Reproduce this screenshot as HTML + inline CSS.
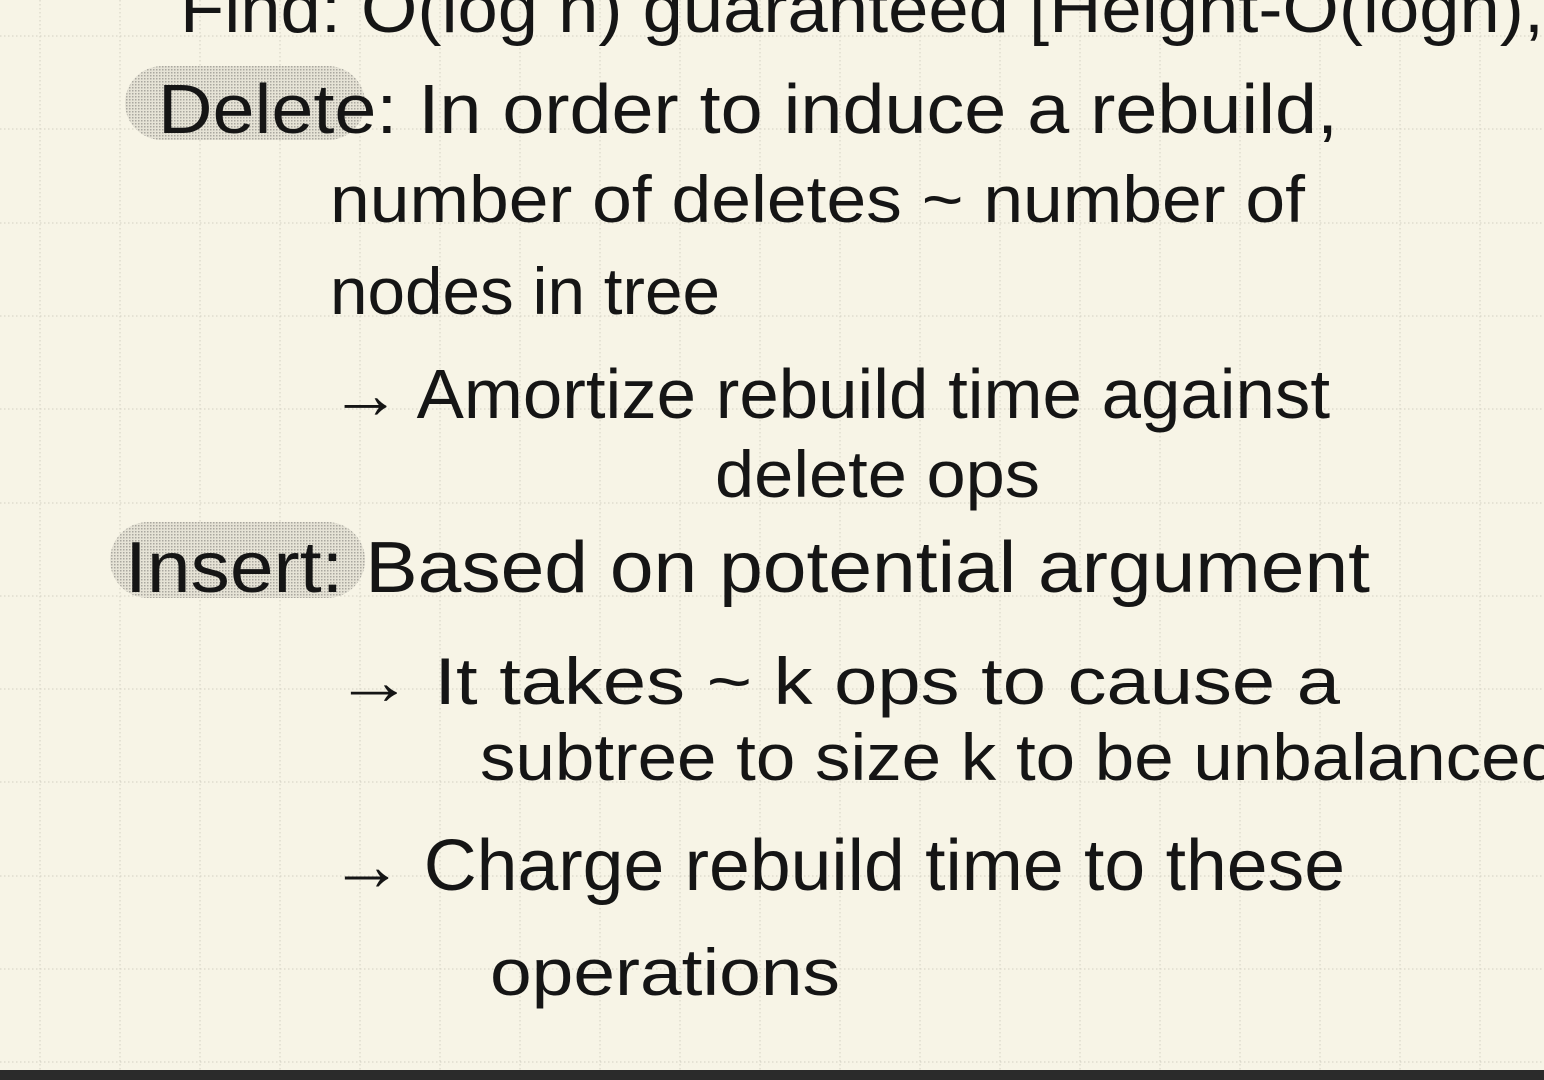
<!DOCTYPE html>
<html><head><meta charset="utf-8"><style>
html,body{margin:0;padding:0;width:1544px;height:1080px;overflow:hidden;background:#f7f4e6}
svg{position:absolute;left:0;top:0}
text{font-family:"Liberation Sans",sans-serif;fill:#151515}
</style></head><body>
<svg width="1544" height="1080" viewBox="0 0 1544 1080">
<defs>
<pattern id="dots" width="3" height="3" patternUnits="userSpaceOnUse"><rect width="3" height="3" fill="#e6e3d6"/><rect width="1.5" height="1.5" fill="#a9a79f"/></pattern>
</defs>
<g stroke="#d3d0c3" stroke-width="1" stroke-dasharray="1.5,2.5">
<line x1="40" y1="0" x2="40" y2="1070"/><line x1="120" y1="0" x2="120" y2="1070"/>
<line x1="200" y1="0" x2="200" y2="1070"/><line x1="280" y1="0" x2="280" y2="1070"/>
<line x1="360" y1="0" x2="360" y2="1070"/><line x1="440" y1="0" x2="440" y2="1070"/>
<line x1="520" y1="0" x2="520" y2="1070"/><line x1="600" y1="0" x2="600" y2="1070"/>
<line x1="680" y1="0" x2="680" y2="1070"/><line x1="760" y1="0" x2="760" y2="1070"/>
<line x1="840" y1="0" x2="840" y2="1070"/><line x1="920" y1="0" x2="920" y2="1070"/>
<line x1="1000" y1="0" x2="1000" y2="1070"/><line x1="1080" y1="0" x2="1080" y2="1070"/>
<line x1="1160" y1="0" x2="1160" y2="1070"/><line x1="1240" y1="0" x2="1240" y2="1070"/>
<line x1="1320" y1="0" x2="1320" y2="1070"/><line x1="1400" y1="0" x2="1400" y2="1070"/>
<line x1="1480" y1="0" x2="1480" y2="1070"/>
<line x1="0" y1="36" x2="1544" y2="36"/><line x1="0" y1="129" x2="1544" y2="129"/>
<line x1="0" y1="223" x2="1544" y2="223"/><line x1="0" y1="316" x2="1544" y2="316"/>
<line x1="0" y1="409" x2="1544" y2="409"/><line x1="0" y1="503" x2="1544" y2="503"/>
<line x1="0" y1="596" x2="1544" y2="596"/><line x1="0" y1="689" x2="1544" y2="689"/>
<line x1="0" y1="782" x2="1544" y2="782"/><line x1="0" y1="876" x2="1544" y2="876"/>
<line x1="0" y1="969" x2="1544" y2="969"/><line x1="0" y1="1062" x2="1544" y2="1062"/>
</g>
<rect x="125" y="66" width="240" height="74" rx="37" fill="url(#dots)"/>
<rect x="110" y="522" width="255" height="76" rx="38" fill="url(#dots)"/>
<text x="180" y="32" font-size="68" textLength="1364" lengthAdjust="spacingAndGlyphs">Find: O(log n) guaranteed [Height-O(logn),</text>
<text x="158" y="133" font-size="70" textLength="1180" lengthAdjust="spacingAndGlyphs">Delete: In order to induce a rebuild,</text>
<text x="330" y="222" font-size="66" textLength="975" lengthAdjust="spacingAndGlyphs">number of deletes ~ number of</text>
<text x="330" y="314" font-size="66" textLength="390" lengthAdjust="spacingAndGlyphs">nodes in tree</text>
<text x="330" y="418" font-size="70" textLength="1000" lengthAdjust="spacingAndGlyphs">→ Amortize rebuild time against</text>
<text x="715" y="497" font-size="66" textLength="325" lengthAdjust="spacingAndGlyphs">delete ops</text>
<text x="125" y="592" font-size="72" textLength="1245" lengthAdjust="spacingAndGlyphs">Insert: Based on potential argument</text>
<text x="335" y="704" font-size="66" textLength="1005" lengthAdjust="spacingAndGlyphs">→ It takes ~ k ops to cause a</text>
<text x="480" y="780" font-size="66" textLength="1080" lengthAdjust="spacingAndGlyphs">subtree to size k to be unbalanced</text>
<text x="330" y="890" font-size="72" textLength="1015" lengthAdjust="spacingAndGlyphs">→ Charge rebuild time to these</text>
<text x="490" y="995" font-size="66" textLength="350" lengthAdjust="spacingAndGlyphs">operations</text>
<rect x="0" y="1070" width="1544" height="10" fill="#2b2b2b"/>
</svg>
</body></html>
